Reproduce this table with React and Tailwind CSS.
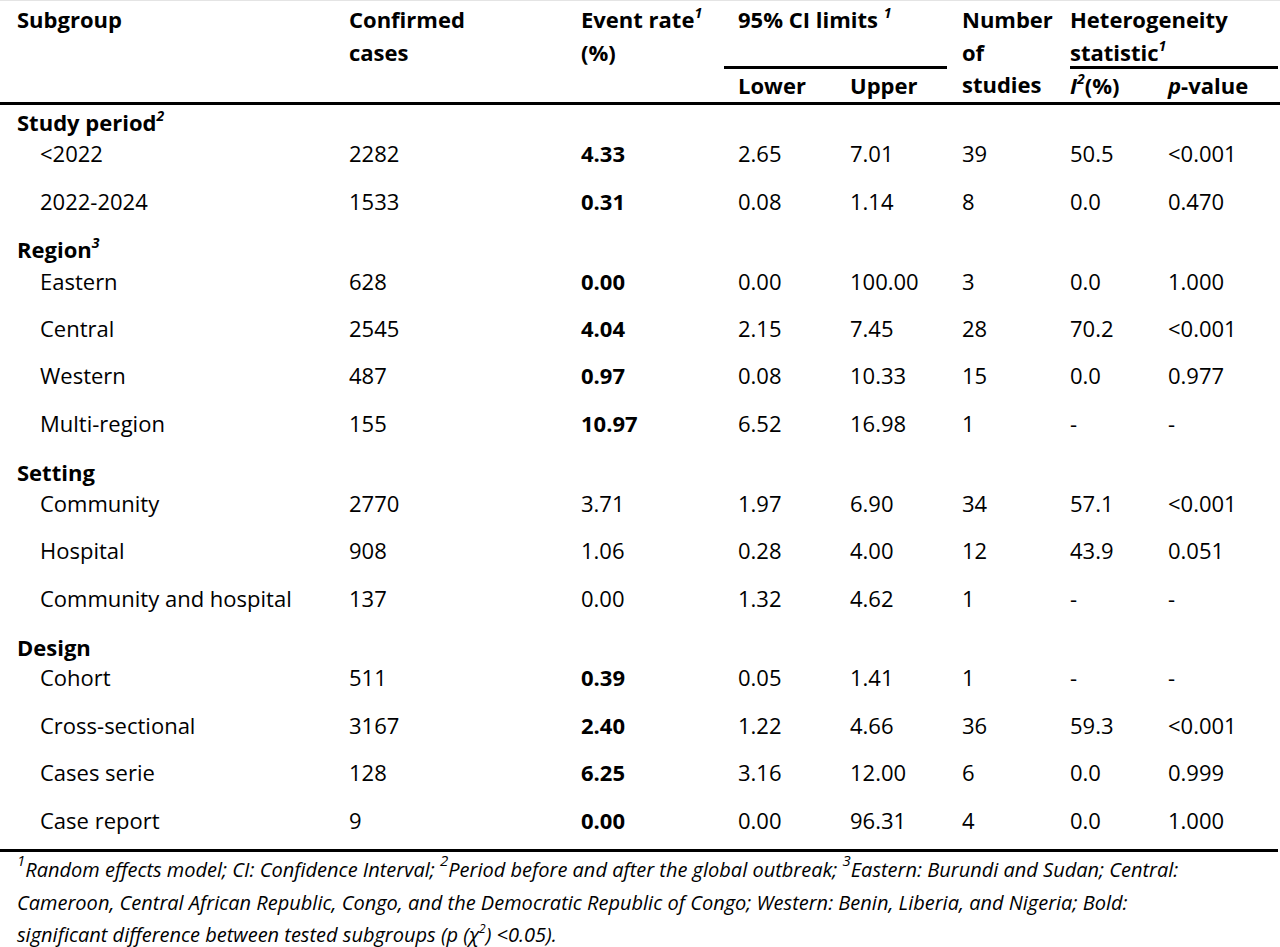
import React from "react";

const COLS = "grid grid-cols-[332px_232px_157px_112px_112px_108px_98px_1fr] pl-[17px]";

const sections = [
  {
    title: "Study period",
    sup: "2",
    first: true,
    rows: [
      ["<2022", "2282", "4.33", true, "2.65", "7.01", "39", "50.5", "<0.001"],
      ["2022-2024", "1533", "0.31", true, "0.08", "1.14", "8", "0.0", "0.470"],
    ],
  },
  {
    title: "Region",
    sup: "3",
    rows: [
      ["Eastern", "628", "0.00", true, "0.00", "100.00", "3", "0.0", "1.000"],
      ["Central", "2545", "4.04", true, "2.15", "7.45", "28", "70.2", "<0.001"],
      ["Western", "487", "0.97", true, "0.08", "10.33", "15", "0.0", "0.977"],
      ["Multi-region", "155", "10.97", true, "6.52", "16.98", "1", "-", "-"],
    ],
  },
  {
    title: "Setting",
    rows: [
      ["Community", "2770", "3.71", false, "1.97", "6.90", "34", "57.1", "<0.001"],
      ["Hospital", "908", "1.06", false, "0.28", "4.00", "12", "43.9", "0.051"],
      ["Community and hospital", "137", "0.00", false, "1.32", "4.62", "1", "-", "-"],
    ],
  },
  {
    title: "Design",
    rows: [
      ["Cohort", "511", "0.39", true, "0.05", "1.41", "1", "-", "-"],
      ["Cross-sectional", "3167", "2.40", true, "1.22", "4.66", "36", "59.3", "<0.001"],
      ["Cases serie", "128", "6.25", true, "3.16", "12.00", "6", "0.0", "0.999"],
      ["Case report", "9", "0.00", true, "0.00", "96.31", "4", "0.0", "1.000"],
    ],
  },
];

function Sup({ children }) {
  return (
    <span className="relative -top-[10px] text-[14px] italic font-bold leading-none">{children}</span>
  );
}

function FSup({ children }) {
  return <span className="relative -top-[11px] text-[15px] leading-none">{children}</span>;
}

export default function App() {
  return (
    <div
      className="w-[1280px] h-[947px] bg-white text-black overflow-hidden"
      style={{ fontFamily: "'Open Sans', 'Noto Sans', sans-serif" }}
    >
      <div className="h-[1px] bg-[#e4e4e4]" />
      {/* Header */}
      <div className={`${COLS} h-[101px] text-[22px] font-bold leading-[32.5px]`}>
        <div className="pt-[2px]">Subgroup</div>
        <div className="pt-[2px]">
          <div>Confirmed</div>
          <div>cases</div>
        </div>
        <div className="pt-[2px]">
          <div className="whitespace-nowrap">
            Event rate<Sup>1</Sup>
          </div>
          <div>(%)</div>
        </div>
        <div className="col-span-2 pt-[2px]">
          <div className="h-[63px] whitespace-nowrap">
            95% CI limits <Sup>1</Sup>
          </div>
          <div className="h-[3px] bg-black -ml-[14px] w-[223px]" />
          <div className="grid grid-cols-[112px_112px]">
            <div>Lower</div>
            <div>Upper</div>
          </div>
        </div>
        <div className="pt-[2px]">
          <div>Number</div>
          <div>of</div>
          <div>studies</div>
        </div>
        <div className="col-span-2 pt-[2px]">
          <div className="whitespace-nowrap">Heterogeneity</div>
          <div className="h-[30.5px]">
            statistic<Sup>1</Sup>
          </div>
          <div className="h-[3px] bg-black w-[208px]" />
          <div className="grid grid-cols-[98px_1fr]">
            <div className="whitespace-nowrap">
              <span className="italic">I</span>
              <span className="relative -top-[10px] text-[14px] italic leading-none">2</span>
              (%)
            </div>
            <div className="whitespace-nowrap">
              <span className="italic">p</span>-value
            </div>
          </div>
        </div>
      </div>
      <div className="h-[3px] bg-black" />

      {/* Body */}
      <div className="text-[22px]">
        {sections.map((s) => (
          <div key={s.title}>
            <div
              className={`${COLS} ${s.first ? "h-[27.5px]" : "h-[32.6px]"} items-end font-bold leading-[20px]`}
            >
              <div className="col-span-8">
                {s.title}
                {s.sup && <Sup>{s.sup}</Sup>}
              </div>
            </div>
            {s.rows.map((r) => (
              <div key={r[0]} className={`${COLS} h-[47.4px] items-center pb-[5px]`}>
                <div className="pl-[23px] whitespace-nowrap">{r[0]}</div>
                <div>{r[1]}</div>
                <div className={r[3] ? "font-bold" : ""}>{r[2]}</div>
                <div>{r[4]}</div>
                <div>{r[5]}</div>
                <div>{r[6]}</div>
                <div>{r[7]}</div>
                <div>{r[8]}</div>
              </div>
            ))}
          </div>
        ))}
      </div>
      <div className="h-[3px] bg-black mt-[3px] w-[1278px]" />

      {/* Footnote */}
      <div className="pl-[17px] pt-[2px] text-[20px] italic leading-[32.5px]">
        <div className="whitespace-nowrap">
          <FSup>1</FSup>
          Random effects model; CI: Confidence Interval; <FSup>2</FSup>
          Period before and after the global outbreak; <FSup>3</FSup>
          Eastern: Burundi and Sudan; Central:
        </div>
        <div className="whitespace-nowrap">
          Cameroon, Central African Republic, Congo, and the Democratic Republic of Congo; Western: Benin, Liberia, and Nigeria; Bold:
        </div>
        <div className="whitespace-nowrap">
          significant difference between tested subgroups (p (χ
          <span className="relative -top-[9px] text-[12px] leading-none">2</span>) &lt;0.05).
        </div>
      </div>
    </div>
  );
}
